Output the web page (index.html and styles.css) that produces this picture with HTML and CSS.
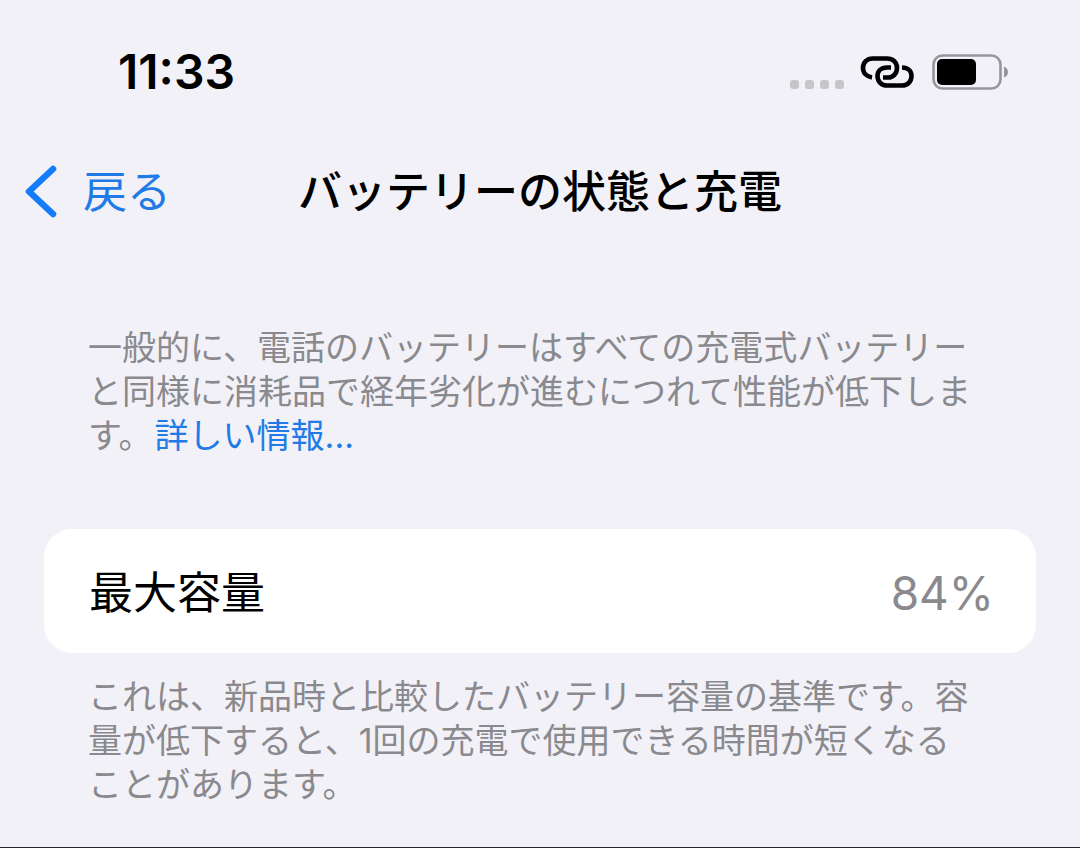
FILE: index.html
```html
<!DOCTYPE html>
<html lang="ja">
<head>
<meta charset="utf-8">
<meta name="viewport" content="width=device-width, initial-scale=1">
<title>バッテリーの状態と充電</title>
<link rel="stylesheet" href="styles.css">
</head>
<body>
<div class="screen">
  <div class="status">
    <time class="clock">11:33</time>
    <div class="indicators">
      <span class="dots"><i class="dot"></i><i class="dot"></i><i class="dot"></i><i class="dot"></i></span>
      <svg class="link-icon" width="54" height="32" viewBox="0 0 54 32" fill="none" stroke="#000" stroke-width="4.600">
        <path d="M12 21.500C6.500 20.500 3 17 3 12C3 6.500 7 2.500 12.500 2.500H27C33 2.500 37 6.500 37 12C37 17.500 33 21.500 28 21.500H23"/>
        <path d="M31 11.500H27C21 11.500 17.500 15 17.500 20C17.500 25.500 21.500 29.500 27 29.500H42C47.500 29.500 51.500 25.500 51.500 20C51.500 15 48 11.500 42 11.500"/>
      </svg>
      <svg class="battery" width="76" height="36" viewBox="0 0 76 36">
        <rect x="1.500" y="1.500" width="67" height="33" rx="9" fill="none" stroke="#96969a" stroke-width="2.600"/>
        <rect x="5" y="5" width="39" height="26" rx="5"/>
        <path d="M72 12.500Q76 14 76 18T72 23.500Z" fill="#96969a"/>
      </svg>
    </div>
  </div>
  <header class="nav">
    <a class="back" href="#">
      <svg width="32" height="54" viewBox="0 0 32 54" fill="none" stroke="#147bfa" stroke-width="6.500" stroke-linecap="round" stroke-linejoin="round"><path d="M28 4L4 26.500L28 49"/></svg>
      <span>戻る</span>
    </a>
    <h1 class="title">バッテリーの状態と充電</h1>
  </header>
  <main class="content">
    <p class="note">一般的に、電話のバッテリーはすべての充電式バッテリー<br>と同様に消耗品で経年劣化が進むにつれて性能が低下しま<br>す。<a class="more" href="#">詳しい情報...</a></p>
    <dl class="card">
      <dt>最大容量</dt>
      <dd class="value">84%</dd>
    </dl>
    <p class="note">これは、新品時と比較したバッテリー容量の基準です。容<br>量が低下すると、1回の充電で使用できる時間が短くなる<br>ことがあります。</p>
  </main>
</div>
</body>
</html>
```
FILE: styles.css
```css
* { box-sizing: border-box; }
body {
  margin: 0;
  background: #f2f1f7;
  color: #000;
  font-family: Inter, "Noto Sans CJK JP", sans-serif;
}
.screen {
  min-height: 100vh;
  border-bottom: 1px solid #28242e;
}
a { color: #217be6; text-decoration: none; }
.status {
  display: flex;
  justify-content: space-between;
  align-items: center;
  padding: 44px 72px 0 118px;
}
.clock { font-size: 48px; line-height: 56px; font-weight: 600; }
.indicators { display: flex; align-items: center; gap: 18px; }
.dots { display: flex; gap: 6px; padding-top: 24px; }
.link-icon { margin-left: -2px; }
.dot { width: 9px; height: 9px; border-radius: 3px; background: #c6c6ca; }
.nav {
  display: grid;
  grid-template-columns: 1fr auto 1fr;
  align-items: center;
  padding: 60px 25px 0;
}
.back {
  display: flex;
  align-items: center;
  gap: 26px;
  font-size: 44px;
  line-height: 64px;
}
.title { margin: 0; font-size: 44px; line-height: 64px; font-weight: 500; }
.content { padding: 102px 44px 40px; }
.note {
  margin: 0;
  padding: 0 0 0 44px;
  font-size: 34px;
  line-height: 44px;
  color: #89898e;
  white-space: nowrap;
}
.more { margin-left: 2px; }
.card {
  display: flex;
  justify-content: space-between;
  align-items: center;
  margin: 71px 0 22px;
  padding: 32px 42px 28px 45px;
  border-radius: 28px;
  background: #fff;
  font-size: 44px;
  line-height: 64px;
}
.value { margin: 0; font-size: 46px; color: #89898e; }
```
